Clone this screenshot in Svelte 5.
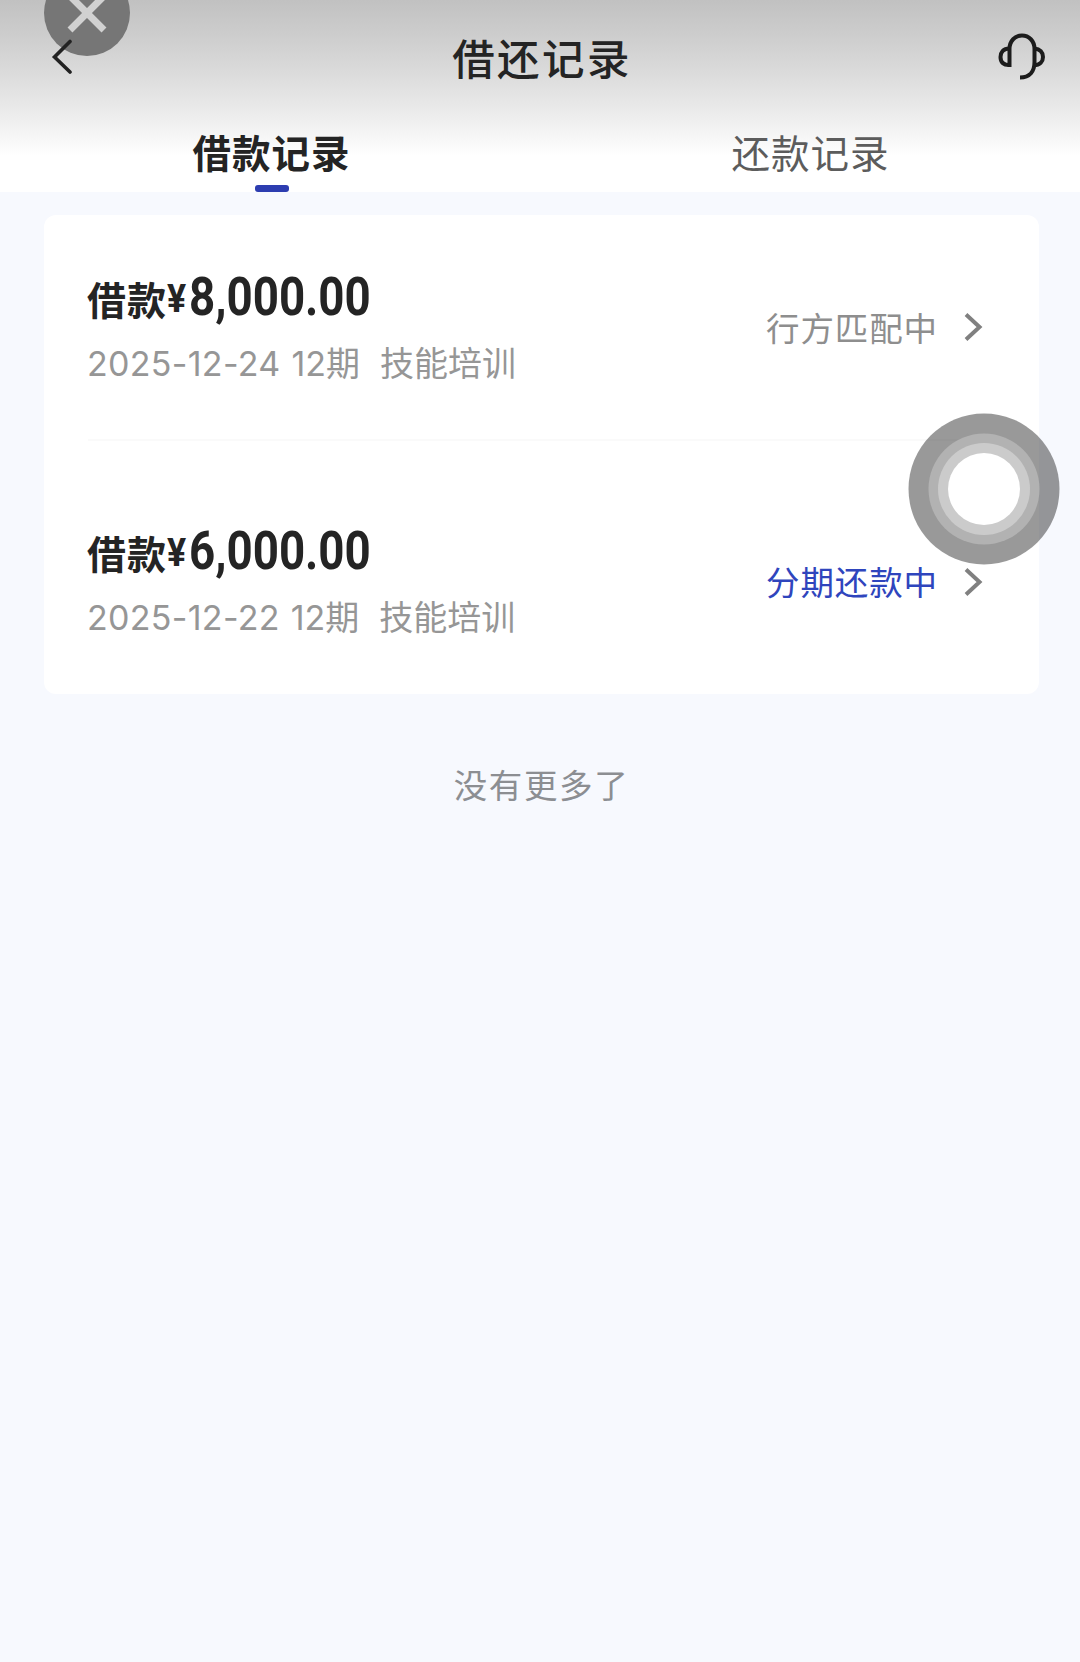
<script>
  let activeTab = $state("borrow");

  const tabs = [
    { id: "borrow", label: "借款记录" },
    { id: "repay", label: "还款记录" },
  ];

  const records = [
    {
      amount: "8,000.00",
      date: "2025-12-24",
      term: "12期",
      usage: "技能培训",
      status: "行方匹配中",
      active: false,
    },
    {
      amount: "6,000.00",
      date: "2025-12-22",
      term: "12期",
      usage: "技能培训",
      status: "分期还款中",
      active: true,
    },
  ];
</script>

<main>
  <button class="close" aria-label="关闭">
    <svg width="86" height="86" viewBox="0 0 86 86">
      <path d="M26 26L60 60M60 26L26 60" stroke="#d1d1d1" stroke-width="7" />
    </svg>
  </button>

  <header>
    <nav>
      <button class="back" aria-label="返回">
        <svg width="24" height="36" viewBox="0 0 24 36" fill="none">
          <path
            d="M20 2.500L4.500 18L20 33"
            stroke="#222"
            stroke-width="3.6"
            stroke-linecap="round"
          />
        </svg>
      </button>
      <h1>借还记录</h1>
      <button class="service" aria-label="客服">
        <svg width="48" height="48" viewBox="0 0 48 48" fill="none">
          <g stroke="#1c1c1c" stroke-width="4">
            <path d="M11.500 34V16C11.500 8 17 2.500 24 2.500S36.500 8 36.500 16V29C36.500 38 32 44.500 22 44.500" />
            <path d="M11.500 15.500C5 15.500 2.500 19.500 2.500 24S5 32 11.500 32" />
            <path d="M36.500 15.500C42 16 45 19.500 45 24S42 32 36 32" />
          </g>
        </svg>
      </button>
    </nav>
    <div class="tabs">
      {#each tabs as tab}
        <button
          class="tab"
          class:active={activeTab === tab.id}
          onclick={() => (activeTab = tab.id)}
        >
          <span>{tab.label}</span>
        </button>
      {/each}
    </div>
  </header>

  <section class="card">
    {#each records as record}
      <article>
        <div class="info">
          <h2>
            <span>借款</span><span class="yen">¥</span><span class="amount"
              >{record.amount}</span
            >
          </h2>
          <p>
            <span class="date">{record.date}</span>
            <span class="term">{record.term}</span>
            <span class="usage">{record.usage}</span>
          </p>
        </div>
        <div class="status" class:active={record.active}>
          <span>{record.status}</span>
          <svg width="22" height="34" viewBox="0 0 22 34" fill="none">
            <path d="M4 4.500L17.500 17L4 29.500" stroke="#808080" stroke-width="4" />
          </svg>
        </div>
      </article>
    {/each}
  </section>

  <p class="end">没有更多了</p>

  <div class="assist">
    <svg width="152" height="152" viewBox="0 0 152 152">
      <circle cx="76" cy="76" r="75.500" fill="#000" fill-opacity="0.4" />
      <circle cx="76" cy="76" r="55.500" fill="#b2b2b2" />
      <circle cx="76" cy="76" r="46" fill="#cbcbcb" />
      <circle cx="76" cy="76" r="36" fill="#fff" />
    </svg>
  </div>
</main>

<style>
  :global(body) {
    margin: 0;
    background: #f7f9fe;
  }

  * {
    box-sizing: border-box;
  }

  main {
    position: relative;
    min-height: 1662px;
    overflow: hidden;
    background: #f7f9fe;
    color: #242424;
    font-family: Inter, "Noto Sans CJK SC", sans-serif;
  }

  h1,
  h2,
  p {
    margin: 0;
  }

  button {
    padding: 0;
    border: 0;
    background: none;
    color: inherit;
    font: inherit;
  }

  svg {
    display: block;
  }

  header {
    height: 192px;
    background: linear-gradient(
      #c1c1c1 0,
      #cdcdcd 35px,
      #dadada 70px,
      #e8e8e8 105px,
      #f3f3f3 130px,
      #fff 156px
    );
  }

  nav {
    display: grid;
    grid-template-columns: 100px 1fr 100px;
    align-items: center;
    height: 114px;
  }

  .back {
    position: relative;
    z-index: 2;
    justify-self: start;
    padding-left: 50px;
  }

  .service {
    justify-self: end;
    padding-right: 34px;
  }

  h1 {
    font-family: "Noto Sans CJK SC", sans-serif;
    font-size: 42.5px;
    font-weight: 500;
    line-height: 60px;
    letter-spacing: 2.4px;
    text-indent: 4px;
    text-align: center;
  }

  .close {
    position: absolute;
    z-index: 1;
    top: -30px;
    left: 44px;
    width: 86px;
    height: 86px;
    border-radius: 50%;
    background: #767676;
  }

  .tabs {
    display: grid;
    grid-template-columns: 1fr 1fr;
    height: 78px;
    padding-left: 2px;
  }

  .tab {
    display: flex;
    flex-direction: column;
    align-items: center;
    justify-content: space-between;
    color: #5c5c5c;
    font-size: 38.5px;
    letter-spacing: 1px;
    line-height: 80px;
  }

  .tab span {
    height: 71px;
  }

  .tab.active {
    color: #242424;
    font-weight: 700;
  }

  .tab.active::after {
    content: "";
    width: 34px;
    height: 7px;
    border-radius: 3px;
    background: #2d3db0;
  }

  .card {
    margin: 23px 41px 0 44px;
    padding: 0 44px;
    height: 479px;
    border-radius: 12px;
    background: #fff;
  }

  article {
    display: flex;
    justify-content: space-between;
    align-items: center;
    height: 224px;
  }

  article + article {
    height: 254px;
    padding-top: 29px;
    border-top: 2px solid #fafafa;
  }

  .info {
    margin-left: -1px;
  }

  h2 {
    display: flex;
    align-items: baseline;
    height: 60px;
    font-size: 39px;
    font-weight: 700;
    line-height: 60px;
    letter-spacing: 1px;
    white-space: nowrap;
  }

  .yen {
    width: 22px;
    font-family: Roboto, sans-serif;
    font-size: 38px;
    letter-spacing: 0;
    transform: translateY(-3px) scaleX(0.94);
    transform-origin: left;
  }

  .amount {
    font-family: Roboto, sans-serif;
    font-size: 53px;
    letter-spacing: 0;
    transform: scaleX(0.862);
    transform-origin: left;
  }

  .info p {
    display: flex;
    height: 48px;
    margin-top: 13px;
    color: #969696;
    font-size: 34px;
    line-height: 48px;
    white-space: nowrap;
  }

  .date {
    letter-spacing: 0.3px;
  }

  .term {
    margin-left: 11px;
  }

  .usage {
    margin-left: 20px;
  }

  .status {
    display: flex;
    align-items: center;
    gap: 24px;
    margin-right: 11px;
    color: #8e8e8e;
    font-size: 33.5px;
    letter-spacing: 0.9px;
  }

  .status span {
    padding-bottom: 2px;
  }

  .status.active {
    color: #2f45bd;
  }

  .end {
    margin-top: 68px;
    padding-left: 3px;
    color: #8c8e92;
    font-size: 33.5px;
    line-height: 48px;
    letter-spacing: 1.6px;
    text-align: center;
  }

  /* floating assistive button, sits over the list */
  .assist {
    position: absolute;
    z-index: 3;
    top: 413px;
    left: 908px;
  }
</style>
